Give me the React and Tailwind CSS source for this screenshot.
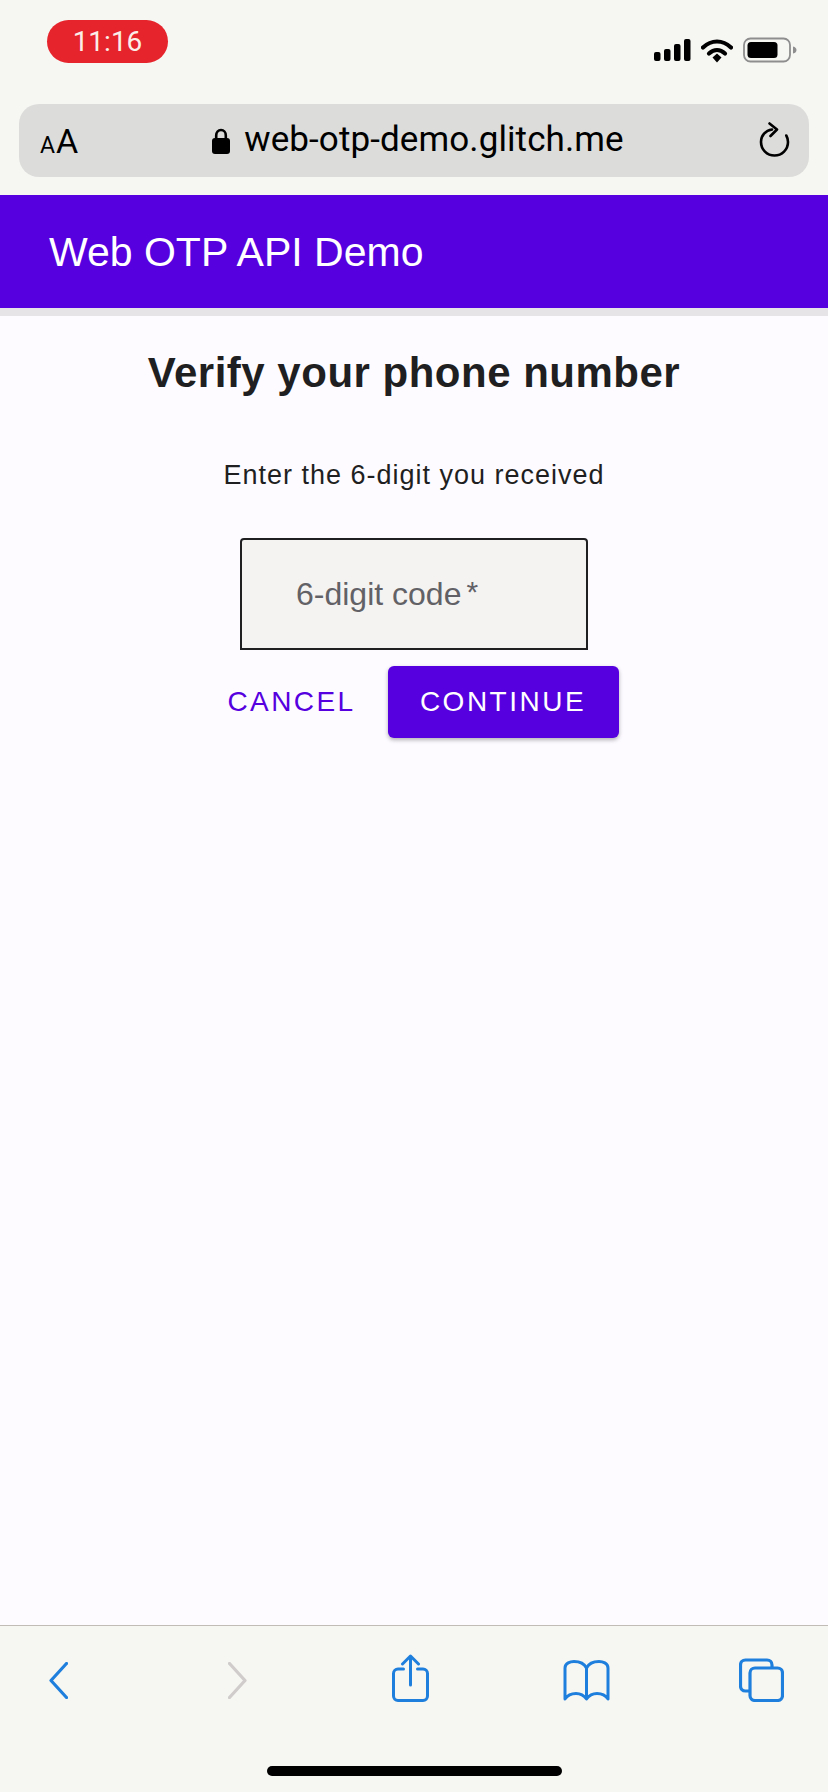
import React from "react";

function StatusIcons() {
  return (
    <div className="flex items-center mr-[31px] mt-[-1px]">
      <svg width="37" height="24" viewBox="0 0 37 24" fill="#000">
        <rect x="0" y="14" width="6.5" height="9" rx="2" />
        <rect x="10" y="11" width="6.5" height="12" rx="2" />
        <rect x="20" y="6" width="6.5" height="17" rx="2" />
        <rect x="30" y="1" width="6.5" height="22" rx="2" />
      </svg>
      <svg className="ml-[10px]" width="32" height="25" viewBox="0 0 32 25">
        <path d="M2 9.5C10.5 1.5 21.5 1.5 30 9.5" fill="none" stroke="#000" strokeWidth="4.2" strokeLinecap="round" />
        <path d="M8 15.5C13 11 19 11 24 15.5" fill="none" stroke="#000" strokeWidth="4.2" strokeLinecap="round" />
        <path d="M11.5 19.5L16 15.5L20.5 19.5L16 24.5Z" fill="#000" />
      </svg>
      <svg className="ml-[10px]" width="54" height="26" viewBox="0 0 54 26">
        <rect x="1" y="1.5" width="46" height="23" rx="6.5" fill="none" stroke="#8e8e8e" strokeWidth="1.8" />
        <rect x="4.5" y="5" width="30" height="16" rx="3.5" fill="#000" />
        <path d="M50 9.5C52.5 10 53.5 11.5 53.5 13C53.5 14.5 52.5 16 50 16.5Z" fill="#8e8e8e" />
      </svg>
    </div>
  );
}

function AddressBar() {
  return (
    <div className="relative mx-[19px] mt-[41px] h-[73px] rounded-[20px] bg-[#dcdcda] flex items-center justify-center pl-[8px]">
      <span className="absolute left-[21px] top-[20px] flex items-baseline text-black leading-none font-['Roboto',sans-serif]">
        <span className="text-[23px]">A</span>
        <span className="text-[34px] ml-[1px]">A</span>
      </span>
      <svg className="mt-[1px]" width="18" height="26" viewBox="0 0 18 26">
        <path d="M4.2 11V7.5C4.2 4.2 6.2 2 9 2C11.8 2 13.8 4.2 13.8 7.5V11" fill="none" stroke="#000" strokeWidth="2.6" />
        <rect x="0" y="10" width="18" height="16" rx="3" fill="#000" />
      </svg>
      <span className="ml-[14px] text-[35px] leading-none text-black tracking-[0.1px] pb-[3px] font-['Roboto',sans-serif]">web-otp-demo.glitch.me</span>
      <svg className="absolute right-[18px] top-[18px]" width="32" height="36" viewBox="0 0 32 36" fill="none" stroke="#000" strokeWidth="2.6" strokeLinecap="round" strokeLinejoin="round">
        <path d="M13 7.5C6.5 8.5 2 13.5 2 20C2 27.5 8 33.5 15.5 33.5C23 33.5 29 27.5 29 20C29 17.5 28.4 15.5 27.3 13.5" />
        <path d="M10.5 1.5L18 7.5L11.5 14" />
      </svg>
    </div>
  );
}

function Toolbar() {
  return (
    <div className="h-[167px] shrink-0 border-t border-[#c2bcb6] bg-[#f6f6f3] relative">
      <div className="flex items-start pl-[49px] pt-[28px]">
        <svg className="mt-[8px]" width="19" height="37" viewBox="0 0 19 37" fill="none" stroke="#1f7fdc" strokeWidth="3.2" strokeLinecap="round" strokeLinejoin="round">
          <path d="M17.5 1.5L2 18.5L17.5 35.5" />
        </svg>
        <svg className="mt-[8px] ml-[160px]" width="19" height="37" viewBox="0 0 19 37" fill="none" stroke="#cfcccb" strokeWidth="3.2" strokeLinecap="round" strokeLinejoin="round">
          <path d="M1.5 1.5L17 18.5L1.5 35.5" />
        </svg>
        <svg className="ml-[145px]" width="37" height="48" viewBox="0 0 37 48" fill="none" stroke="#1f7fdc" strokeWidth="3" strokeLinecap="round" strokeLinejoin="round">
          <path d="M11.5 15H6C3.5 15 1.5 17 1.5 19.5V42C1.5 44.5 3.5 46.5 6 46.5H31C33.5 46.5 35.5 44.5 35.5 42V19.5C35.5 17 33.5 15 31 15H25.5" />
          <path d="M18.5 31V2M10.5 10L18.5 2L26.5 10" />
        </svg>
        <svg className="mt-[6px] ml-[134px]" width="47" height="41" viewBox="0 0 47 41" fill="none" stroke="#1f7fdc" strokeWidth="3" strokeLinecap="round" strokeLinejoin="round">
          <path d="M23.5 8C21 3 16 1.5 11 1.5C7.5 1.5 2 3 2 8V39C5 34.5 9 33.5 13 33.5C17.5 33.5 21 35.5 23.5 39C26 35.5 29.5 33.5 34 33.5C38 33.5 42 34.5 45 39V8C45 3 39.5 1.5 36 1.5C31 1.5 26 3 23.5 8Z" />
          <path d="M23.5 8V38" />
        </svg>
        <svg className="mt-[4px] ml-[129px]" width="45" height="44" viewBox="0 0 45 44" fill="none" stroke="#1f7fdc" strokeWidth="3.2" strokeLinejoin="round">
          <path d="M10 33H6.5C3.5 33 1.5 31 1.5 28V7C1.5 4 3.5 2 6.5 2H28C31 2 33 4 33 7V9.5" />
          <rect x="11" y="10" width="32.5" height="32.5" rx="5" />
        </svg>
      </div>
      <div className="absolute left-[267px] bottom-[16px] w-[295px] h-[10px] rounded-full bg-black" />
    </div>
  );
}

export default function App() {
  return (
    <div className="w-[828px] h-[1792px] flex flex-col bg-[#fdfbff] font-['Liberation_Sans',Arial,sans-serif]">
      <div className="shrink-0 h-[195px] bg-[#f6f6f3] pt-[20px]">
        <div className="flex items-end justify-between h-[43px]">
          <div className="ml-[47px] w-[121px] h-[43px] rounded-[22px] bg-[#e6242b] text-[#fbeee8] text-[28px] flex items-center justify-center font-['Roboto',sans-serif]">
            11:16
          </div>
          <StatusIcons />
        </div>
        <AddressBar />
      </div>

      <header className="shrink-0 h-[113px] bg-[#5600e0] flex items-center pl-[49px] pt-[2px]">
        <h2 className="text-[41px] leading-none text-white font-normal">Web OTP API Demo</h2>
      </header>
      <div className="shrink-0 h-[8px] bg-[#e6e4e6]" />

      <main className="flex-1 flex flex-col items-center">
        <h1 className="mt-[33px] text-[42px] leading-[48px] font-bold text-[#1f1f22] tracking-[0.5px]">Verify your phone number</h1>
        <p className="mt-[62px] text-[27px] leading-[32px] text-[#1f1f22] tracking-[1px]">Enter the 6-digit you received</p>
        <div className="mt-[47px] w-[348px] h-[112px] rounded-t-[4px] border-2 border-[#1f1f22] bg-[#f4f3f2] flex items-center pl-[54px]">
          <span className="text-[32px] leading-none text-[#626166]">6-digit code<span className="text-[30px] relative top-[-3px] ml-[5px]">*</span></span>
        </div>
        <div className="mt-[16px] ml-[18px] flex items-center w-[391px]">
          <button className="text-[28px] leading-none text-[#5600e0] tracking-[2.4px]">CANCEL</button>
          <button className="ml-auto w-[231px] h-[72px] rounded-[6px] bg-[#5600e0] text-white text-[28px] leading-none tracking-[2.5px] shadow-[0_2px_4px_rgba(0,0,0,0.3)]">CONTINUE</button>
        </div>
      </main>

      <Toolbar />
    </div>
  );
}
